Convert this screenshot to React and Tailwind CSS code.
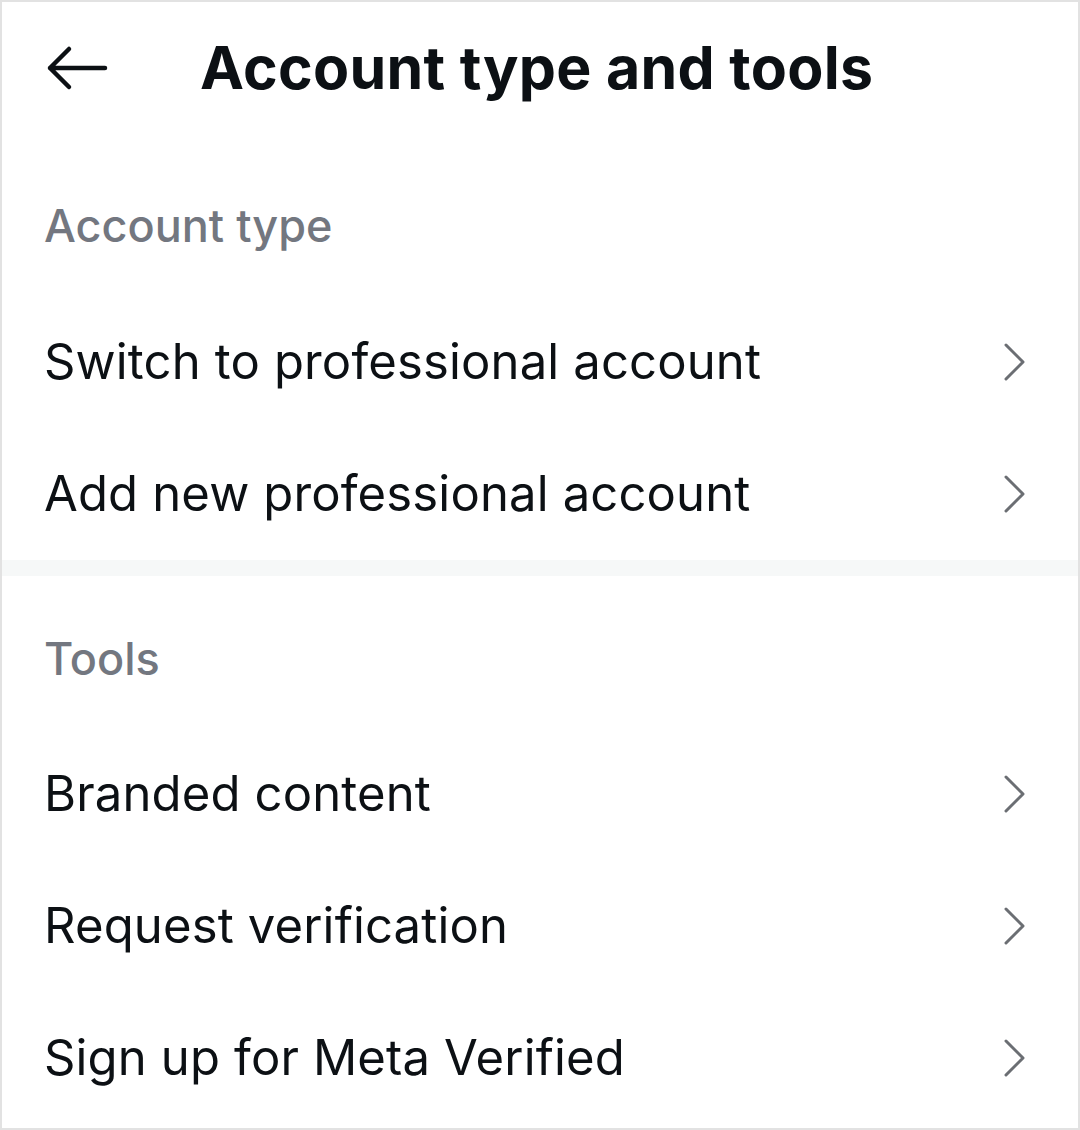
import React from 'react';

const font = { fontFamily: 'Inter, "Noto Sans", sans-serif' };

function Chevron() {
  return (
    <svg width="26" height="40" viewBox="0 0 26 40" fill="none" className="shrink-0">
      <path d="M4 3 L21 20 L4 37" stroke="#6b6e73" strokeWidth="3" strokeLinecap="round" strokeLinejoin="round" />
    </svg>
  );
}

function Row({ label }) {
  return (
    <div className="flex items-center justify-between h-[132px] pl-[42px] pr-[50px]">
      <span className="text-[49px] text-[#0c1014] tracking-[0.15px]">{label}</span>
      <Chevron />
    </div>
  );
}

export default function App() {
  return (
    <div className="w-[1080px] h-[1130px] bg-white border-2 border-[#e2e2e2] overflow-hidden" style={font}>
      <div className="flex items-center h-[132px] pl-[44px]">
        <svg width="62" height="46" viewBox="0 0 62 46" fill="none">
          <path d="M4 23 H59 M23 4 L4 23 L23 42" stroke="#0c1014" strokeWidth="4.5" strokeLinecap="round" strokeLinejoin="round" />
        </svg>
        <h1 className="ml-[92px] text-[59px] font-bold text-[#0c1014] tracking-[0.3px]">Account type and tools</h1>
      </div>
      <div>
        <div className="h-[162px] flex items-center pt-[22px] pl-[42px]">
          <span className="text-[45px] font-medium text-[#737780]">Account type</span>
        </div>
        <Row label="Switch to professional account" />
        <Row label="Add new professional account" />
      </div>
      <div className="h-[16px] bg-[#f6f8f8]" />
      <div>
        <div className="h-[152px] flex items-center pt-[14px] pl-[42px]">
          <span className="text-[45px] font-medium text-[#737780]">Tools</span>
        </div>
        <Row label="Branded content" />
        <Row label="Request verification" />
        <Row label="Sign up for Meta Verified" />
      </div>
    </div>
  );
}
